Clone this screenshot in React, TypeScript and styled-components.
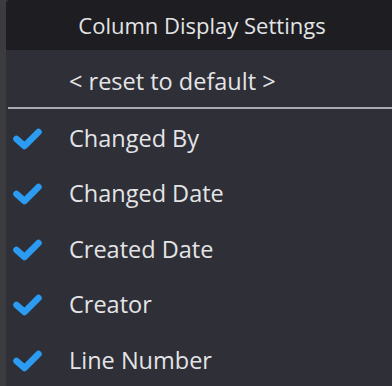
import React from 'react';
import styled, { createGlobalStyle } from 'styled-components';

const GlobalStyle = createGlobalStyle`
    html, body {
        margin: 0;
        padding: 0;
        background: #3b3b40;
        width: 392px;
        height: 386px;
        overflow: hidden;
    }
`;

const columns = ['Changed By', 'Changed Date', 'Created Date', 'Creator', 'Line Number'];

const CheckIcon: React.FC = () => (
    <svg width="32" height="26" viewBox="0 0 32 26">
        <path
            d="M4.5 14 L12.5 21 L26.5 7"
            fill="none"
            stroke="#2b9cf2"
            strokeWidth="6.5"
            strokeLinecap="round"
            strokeLinejoin="round"
        />
    </svg>
);

const App: React.FC = () => {
    return (
        <>
            <GlobalStyle />
            <Page>
                <Menu>
                    <Header>Column Display Settings</Header>
                    <ResetRow>&lt; reset to default &gt;</ResetRow>
                    <Separator />
                    {columns.map(name => (
                        <Item key={name}>
                            <CheckSlot>
                                <CheckIcon />
                            </CheckSlot>
                            <Label>{name}</Label>
                        </Item>
                    ))}
                </Menu>
            </Page>
        </>
    );
};

const Page = styled.div`
    display: flex;
    width: 392px;
    height: 386px;
    padding-left: 6px;
    box-sizing: border-box;
`;

const Menu = styled.div`
    flex: 1;
    display: flex;
    flex-direction: column;
    background-color: #2e2f37;
    border-top-left-radius: 4px;
    overflow: hidden;
    font-family: 'Open Sans', 'Noto Sans', sans-serif;
    color: #e4e4e6;
`;

const Header = styled.div`
    height: 50px;
    display: flex;
    align-items: center;
    justify-content: center;
    padding-left: 6px;
    background-color: #1d1d22;
    font-size: 22px;
`;

const ResetRow = styled.div`
    height: 57px;
    display: flex;
    align-items: center;
    padding-left: 63px;
    padding-top: 5px;
    box-sizing: border-box;
    font-size: 23.5px;
`;

const Separator = styled.div`
    height: 2px;
    margin-left: 2px;
    background-color: #a9a9ae;
`;

const Item = styled.div`
    height: 55.5px;
    display: flex;
    align-items: center;
    padding-top: 3px;
    box-sizing: border-box;
`;

const CheckSlot = styled.div`
    width: 63px;
    display: flex;
    padding-left: 6px;
    box-sizing: border-box;
`;

const Label = styled.span`
    font-size: 23.5px;
`;

export default App;
